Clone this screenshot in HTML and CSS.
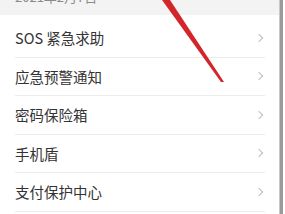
FILE: index.html
```html
<!DOCTYPE html>
<html lang="zh">
<head>
<meta charset="utf-8">
<link rel="stylesheet" href="styles.css">
</head>
<body>
<div class="page">
  <div class="content">
    <div class="header"><span class="date">2021年2月7日</span></div>
    <div class="gap"></div>
    <ul class="list">
      <li class="row"><span class="label">SOS 紧急求助</span><span class="chev"></span></li>
      <li class="row"><span class="label">应急预警通知</span><span class="chev"></span></li>
      <li class="row"><span class="label">密码保险箱</span><span class="chev"></span></li>
      <li class="row"><span class="label">手机盾</span><span class="chev"></span></li>
      <li class="row"><span class="label">支付保护中心</span><span class="chev"></span></li>
    </ul>
  </div>
  <div class="edge"></div>
  <div class="tail"></div>
  <svg class="arrow" width="285" height="214" viewBox="0 0 285 214">
    <polygon points="162,0 170,0 224,82 221,82" fill="#d2262b"/>
  </svg>
</div>
</body>
</html>
```
FILE: styles.css
```css
html, body {
  margin: 0;
  padding: 0;
  background: #fff;
}
.page {
  position: relative;
  width: 285px;
  height: 214px;
  overflow: hidden;
  display: flex;
  font-family: "Noto Sans CJK SC", "Noto Sans", sans-serif;
}
.content {
  width: 279px;
  display: flex;
  flex-direction: column;
}
.header {
  height: 15px;
  background: #f3f3f3;
  overflow: hidden;
  padding-left: 15px;
}
.date {
  display: block;
  font-size: 13px;
  line-height: 13px;
  margin-top: -10px;
  color: #8a8a8a;
}
.gap {
  height: 4px;
}
.list {
  list-style: none;
  margin: 0 14px 0 15px;
  padding: 0;
}
.row {
  height: 37.5px;
  border-bottom: 1px solid #ececec;
  display: flex;
  align-items: center;
  justify-content: space-between;
}
.label {
  font-size: 14.5px;
  color: #333;
  letter-spacing: 0;
}
.chev {
  width: 5px;
  height: 5px;
  border-top: 1.2px solid #bdbdbd;
  border-right: 1.2px solid #bdbdbd;
  transform: rotate(45deg);
  margin-right: 3px;
}
.edge {
  width: 3px;
  background: #9a9a9a;
  border-left: 1px solid #c8c8c8;
}
.tail {
  flex: 1;
  background: #fff;
}
.arrow {
  position: absolute;
  left: 0;
  top: 0;
  pointer-events: none;
}
```
